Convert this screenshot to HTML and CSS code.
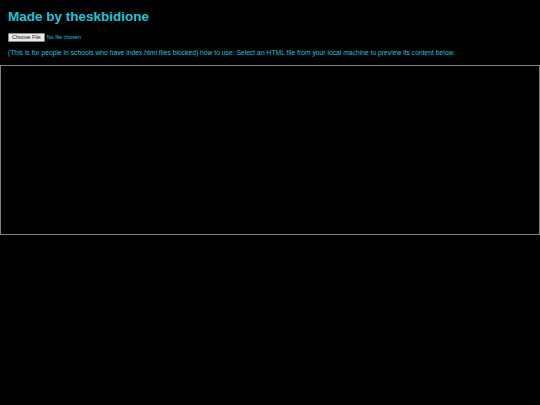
FILE: index.html
```html
<!DOCTYPE html>
<html lang="en">
<head>
<meta charset="utf-8">
<title>HTML Previewer</title>
<link rel="stylesheet" href="styles.css">
</head>
<body>
<div class="intro">
  <h1 class="title">Made by theskbidione</h1>
  <input class="picker" type="file" accept=".html">
  <p class="help">(This is for people in schools who have index.html files blocked) how to use: Select an HTML file from your local machine to preview its content below.</p>
</div>
<div class="preview"></div>
</body>
</html>
```

FILE: styles.css
```css
html, body {
  margin: 0;
  background: #000;
}
body {
  font-family: "Liberation Sans", Arial, sans-serif;
  color: #1cc5dd;
}
.intro {
  padding: 8px 8px 0;
}
.title {
  margin: 0;
  font-size: 13.5px;
  line-height: 17px;
  font-weight: bold;
  color: #1cc5dd;
}
.picker {
  display: block;
  margin-top: 8px;
  height: 9px;
  font-family: "Liberation Sans", Arial, sans-serif;
  font-size: 5.4px;
  line-height: 9px;
  color: #1cc5dd;
}
.picker::file-selector-button {
  height: 9px;
  margin: 0 2px 0 0;
  padding: 0 3px;
  font-family: "Liberation Sans", Arial, sans-serif;
  font-size: 5.4px;
  line-height: 7px;
  color: #222;
  background: #e9e9e9;
  border: 1px solid #8a8a8a;
  border-radius: 1px;
}
.help {
  margin: 6px 0 0;
  font-size: 6.75px;
  line-height: 9px;
}
.preview {
  margin-top: 8px;
  height: 168px;
  border: 1px solid #808080;
  background: #000;
}
```
